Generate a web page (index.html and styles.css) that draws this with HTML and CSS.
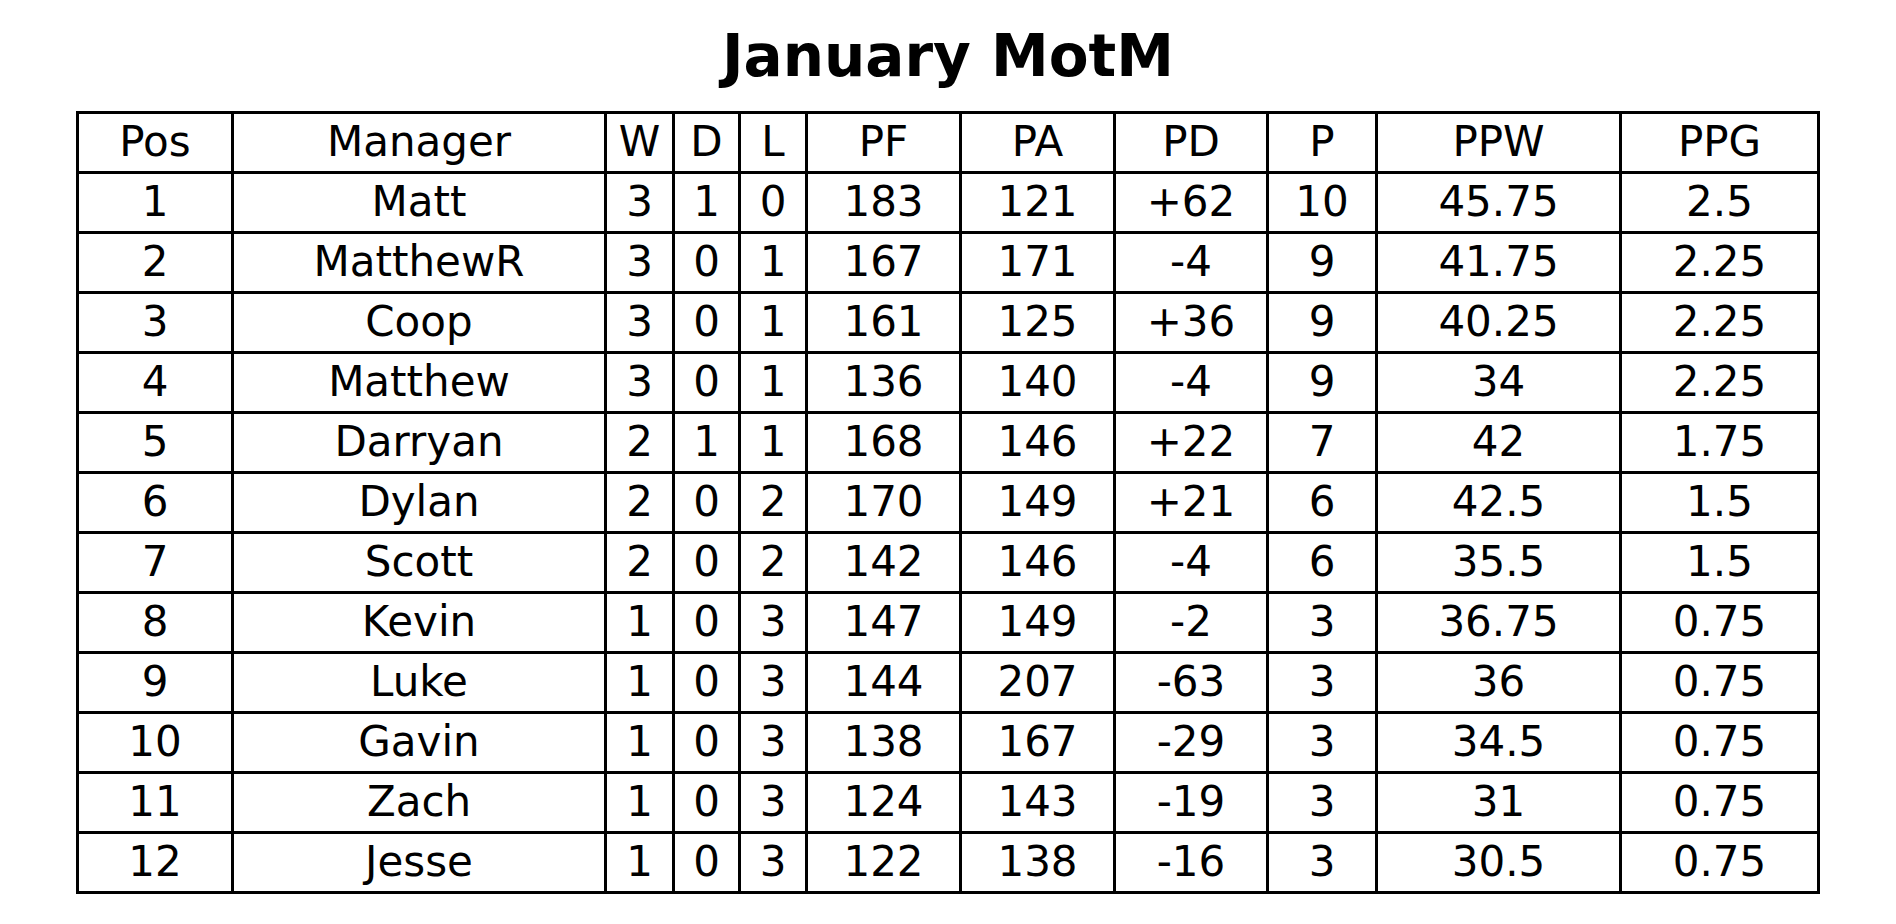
FILE: index.html
```html
<!DOCTYPE html>
<html lang="en">
<head>
<meta charset="utf-8">
<title>January MotM</title>
<link rel="stylesheet" href="styles.css">
</head>
<body>
<h1 class="title">January MotM</h1>
<table class="standings">
  <colgroup>
    <col class="c-pos"><col class="c-mgr"><col class="c-w"><col class="c-d"><col class="c-l">
    <col class="c-pf"><col class="c-pa"><col class="c-pd"><col class="c-p"><col class="c-ppw"><col class="c-ppg">
  </colgroup>
  <thead>
    <tr><th>Pos</th><th>Manager</th><th>W</th><th>D</th><th>L</th><th>PF</th><th>PA</th><th>PD</th><th>P</th><th>PPW</th><th>PPG</th></tr>
  </thead>
  <tbody>
    <tr><td>1</td><td>Matt</td><td>3</td><td>1</td><td>0</td><td>183</td><td>121</td><td>+62</td><td>10</td><td>45.75</td><td>2.5</td></tr>
    <tr><td>2</td><td>MatthewR</td><td>3</td><td>0</td><td>1</td><td>167</td><td>171</td><td>-4</td><td>9</td><td>41.75</td><td>2.25</td></tr>
    <tr><td>3</td><td>Coop</td><td>3</td><td>0</td><td>1</td><td>161</td><td>125</td><td>+36</td><td>9</td><td>40.25</td><td>2.25</td></tr>
    <tr><td>4</td><td>Matthew</td><td>3</td><td>0</td><td>1</td><td>136</td><td>140</td><td>-4</td><td>9</td><td>34</td><td>2.25</td></tr>
    <tr><td>5</td><td>Darryan</td><td>2</td><td>1</td><td>1</td><td>168</td><td>146</td><td>+22</td><td>7</td><td>42</td><td>1.75</td></tr>
    <tr><td>6</td><td>Dylan</td><td>2</td><td>0</td><td>2</td><td>170</td><td>149</td><td>+21</td><td>6</td><td>42.5</td><td>1.5</td></tr>
    <tr><td>7</td><td>Scott</td><td>2</td><td>0</td><td>2</td><td>142</td><td>146</td><td>-4</td><td>6</td><td>35.5</td><td>1.5</td></tr>
    <tr><td>8</td><td>Kevin</td><td>1</td><td>0</td><td>3</td><td>147</td><td>149</td><td>-2</td><td>3</td><td>36.75</td><td>0.75</td></tr>
    <tr><td>9</td><td>Luke</td><td>1</td><td>0</td><td>3</td><td>144</td><td>207</td><td>-63</td><td>3</td><td>36</td><td>0.75</td></tr>
    <tr><td>10</td><td>Gavin</td><td>1</td><td>0</td><td>3</td><td>138</td><td>167</td><td>-29</td><td>3</td><td>34.5</td><td>0.75</td></tr>
    <tr><td>11</td><td>Zach</td><td>1</td><td>0</td><td>3</td><td>124</td><td>143</td><td>-19</td><td>3</td><td>31</td><td>0.75</td></tr>
    <tr><td>12</td><td>Jesse</td><td>1</td><td>0</td><td>3</td><td>122</td><td>138</td><td>-16</td><td>3</td><td>30.5</td><td>0.75</td></tr>
  </tbody>
</table>
</body>
</html>
```
FILE: styles.css
```css
html, body {
  margin: 0;
  padding: 0;
  background: #ffffff;
  color: #000000;
  font-family: "DejaVu Sans", "Liberation Sans", sans-serif;
}

.title {
  margin: 0;
  padding-top: 22px;
  font-size: 58px;
  line-height: 68px;
  font-weight: bold;
  text-align: center;
}

.standings {
  margin: 21px auto 0;
  width: 1744px;
  table-layout: fixed;
  border-collapse: separate;
  border-spacing: 0;
  border-left: 3px solid #000;
  border-top: 3px solid #000;
  font-size: 42px;
}

.standings tr {
  height: 60px;
}

.standings th,
.standings td {
  box-sizing: border-box;
  padding: 0;
  border-right: 3px solid #000;
  border-bottom: 3px solid #000;
  font-weight: normal;
  text-align: center;
  vertical-align: middle;
  line-height: 1.16;
  white-space: nowrap;
}

.c-pos { width: 155px; }
.c-mgr { width: 373px; }
.c-w { width: 68px; }
.c-d { width: 66px; }
.c-l { width: 67px; }
.c-pf { width: 154px; }
.c-pa { width: 154px; }
.c-pd { width: 153px; }
.c-p { width: 109px; }
.c-ppw { width: 244px; }
.c-ppg { width: 198px; }
```
